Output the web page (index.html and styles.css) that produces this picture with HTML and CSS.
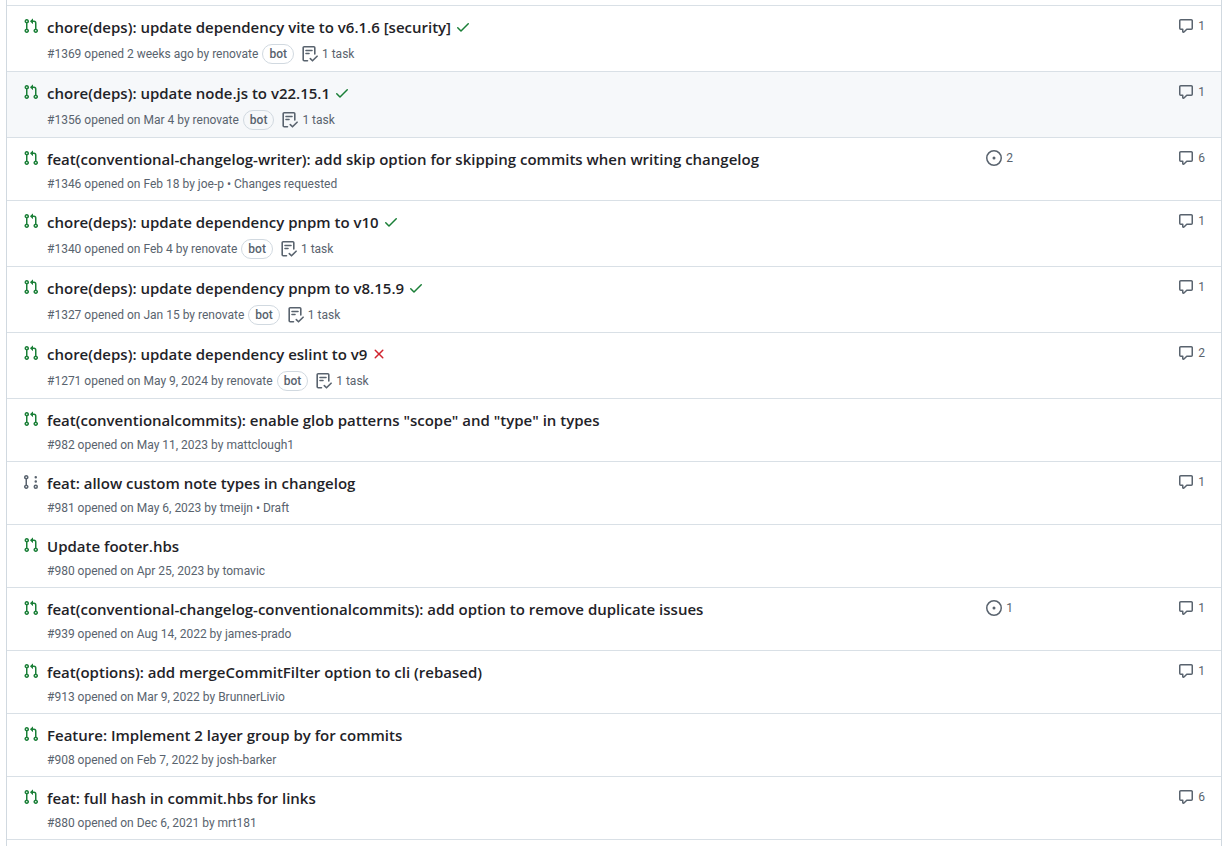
FILE: index.html
```html
<!DOCTYPE html>
<html lang="en">
<head>
<meta charset="utf-8">
<title>Pull requests</title>
<link rel="stylesheet" href="styles.css">
</head>
<body>
<svg class="sprite" aria-hidden="true">
  <symbol id="pr" viewBox="0 0 16 16"><path d="M1.5 3.25a2.25 2.25 0 1 1 3 2.122v5.256a2.251 2.251 0 1 1-1.5 0V5.372A2.25 2.25 0 0 1 1.5 3.25Zm5.677-.177L9.573.677A.25.25 0 0 1 10 .854V2.5h1A2.5 2.5 0 0 1 13.5 5v5.628a2.251 2.251 0 1 1-1.5 0V5a1 1 0 0 0-1-1h-1v1.646a.25.25 0 0 1-.427.177L7.177 3.427a.25.25 0 0 1 0-.354ZM3.75 2.5a.75.75 0 1 0 0 1.5.75.75 0 0 0 0-1.5Zm0 9.5a.75.75 0 1 0 0 1.5.75.75 0 0 0 0-1.5Zm8.25.75a.75.75 0 1 0 1.5 0 .75.75 0 0 0-1.5 0Z"/></symbol>
  <symbol id="draft" viewBox="0 0 16 16"><path d="M3.25 1A2.25 2.25 0 0 1 4 5.372v5.256a2.251 2.251 0 1 1-1.5 0V5.372A2.251 2.251 0 0 1 3.25 1Zm9.5 14a2.25 2.25 0 1 1 0-4.5 2.25 2.25 0 0 1 0 4.5ZM2.5 3.25a.75.75 0 1 0 1.5 0 .75.75 0 0 0-1.5 0ZM3.25 12a.75.75 0 1 0 0 1.5.75.75 0 0 0 0-1.5Zm9.5 0a.75.75 0 1 0 0 1.5.75.75 0 0 0 0-1.5ZM14 7.5a1.25 1.25 0 1 1-2.5 0 1.25 1.25 0 0 1 2.5 0Zm0-4.25a1.25 1.25 0 1 1-2.5 0 1.25 1.25 0 0 1 2.5 0Z"/></symbol>
  <symbol id="check" viewBox="0 0 16 16"><path d="M13.78 4.22a.75.75 0 0 1 0 1.06l-7.25 7.25a.75.75 0 0 1-1.06 0L2.22 9.28a.751.751 0 0 1 .018-1.042.751.751 0 0 1 1.042-.018L6 10.94l6.72-6.72a.75.75 0 0 1 1.06 0Z"/></symbol>
  <symbol id="x" viewBox="0 0 16 16"><path d="M3.72 3.72a.75.75 0 0 1 1.06 0L8 6.94l3.22-3.22a.749.749 0 0 1 1.275.326.749.749 0 0 1-.215.734L9.06 8l3.22 3.22a.749.749 0 0 1-.326 1.275.749.749 0 0 1-.734-.215L8 9.06l-3.22 3.22a.751.751 0 0 1-1.042-.018.751.751 0 0 1-.018-1.042L6.94 8 3.72 4.78a.75.75 0 0 1 0-1.06Z"/></symbol>
  <symbol id="comment" viewBox="0 0 16 16"><path d="M1 2.75C1 1.784 1.784 1 2.75 1h10.5c.966 0 1.75.784 1.75 1.75v7.5A1.75 1.75 0 0 1 13.25 12H9.06l-2.573 2.573A1.458 1.458 0 0 1 4 13.543V12H2.75A1.75 1.75 0 0 1 1 10.25Zm1.75-.25a.25.25 0 0 0-.25.25v7.5c0 .138.112.25.25.25h2a.75.75 0 0 1 .75.75v2.19l2.72-2.72a.749.749 0 0 1 .53-.22h4.5a.25.25 0 0 0 .25-.25v-7.5a.25.25 0 0 0-.25-.25Z"/></symbol>
  <symbol id="issue" viewBox="0 0 16 16"><path d="M8 9.5a1.5 1.5 0 1 0 0-3 1.5 1.5 0 0 0 0 3Z"/><path d="M8 0a8 8 0 1 1 0 16A8 8 0 0 1 8 0ZM1.500 8a6.500 6.500 0 1 0 13 0 6.500 6.500 0 0 0-13 0Z"/></symbol>
  <symbol id="task" viewBox="0 0 16 16"><path fill="none" stroke="currentColor" stroke-width="1.6" stroke-linecap="round" stroke-linejoin="round" d="M5.500 14.800H2.200a1 1 0 0 1-1-1V1.800a1 1 0 0 1 1-1h9.600a1 1 0 0 1 1 1V8M4 4.500h6M4 7.500h3M8.300 12.600l2.200 2.200 4.600-4.600"/></symbol>
</svg>
<main>
<ul class="list">
  <li class="row">
    <svg class="state open"><use href="#pr"/></svg>
    <div class="body">
      <div class="heading"><a class="title" href="#1369">chore(deps): update dependency vite to v6.1.6 [security]</a><svg class="status pass"><use href="#check"/></svg></div>
      <div class="meta has-label"><span>#1369 opened 2 weeks ago by <a href="#renovate">renovate</a></span><span class="label">bot</span><svg class="task"><use href="#task"/></svg><span>1 task</span></div>
    </div>
    <div class="linked"></div>
    <div class="comments"><a class="count" href="#c1369"><svg><use href="#comment"/></svg>1</a></div>
  </li>
  <li class="row focused">
    <svg class="state open"><use href="#pr"/></svg>
    <div class="body">
      <div class="heading"><a class="title" href="#1356">chore(deps): update node.js to v22.15.1</a><svg class="status pass"><use href="#check"/></svg></div>
      <div class="meta has-label"><span>#1356 opened on Mar 4 by <a href="#renovate">renovate</a></span><span class="label">bot</span><svg class="task"><use href="#task"/></svg><span>1 task</span></div>
    </div>
    <div class="linked"></div>
    <div class="comments"><a class="count" href="#c1356"><svg><use href="#comment"/></svg>1</a></div>
  </li>
  <li class="row">
    <svg class="state open"><use href="#pr"/></svg>
    <div class="body">
      <div class="heading"><a class="title" href="#1346">feat(conventional-changelog-writer): add skip option for skipping commits when writing changelog</a></div>
      <div class="meta"><span>#1346 opened on Feb 18 by <a href="#joe-p">joe-p</a> • <a href="#review">Changes requested</a></span></div>
    </div>
    <div class="linked"><a class="count" href="#l1346"><svg class="issue"><use href="#issue"/></svg>2</a></div>
    <div class="comments"><a class="count" href="#c1346"><svg><use href="#comment"/></svg>6</a></div>
  </li>
  <li class="row">
    <svg class="state open"><use href="#pr"/></svg>
    <div class="body">
      <div class="heading"><a class="title" href="#1340">chore(deps): update dependency pnpm to v10</a><svg class="status pass"><use href="#check"/></svg></div>
      <div class="meta has-label"><span>#1340 opened on Feb 4 by <a href="#renovate">renovate</a></span><span class="label">bot</span><svg class="task"><use href="#task"/></svg><span>1 task</span></div>
    </div>
    <div class="linked"></div>
    <div class="comments"><a class="count" href="#c1340"><svg><use href="#comment"/></svg>1</a></div>
  </li>
  <li class="row">
    <svg class="state open"><use href="#pr"/></svg>
    <div class="body">
      <div class="heading"><a class="title" href="#1327">chore(deps): update dependency pnpm to v8.15.9</a><svg class="status pass"><use href="#check"/></svg></div>
      <div class="meta has-label"><span>#1327 opened on Jan 15 by <a href="#renovate">renovate</a></span><span class="label">bot</span><svg class="task"><use href="#task"/></svg><span>1 task</span></div>
    </div>
    <div class="linked"></div>
    <div class="comments"><a class="count" href="#c1327"><svg><use href="#comment"/></svg>1</a></div>
  </li>
  <li class="row">
    <svg class="state open"><use href="#pr"/></svg>
    <div class="body">
      <div class="heading"><a class="title" href="#1271">chore(deps): update dependency eslint to v9</a><svg class="status fail"><use href="#x"/></svg></div>
      <div class="meta has-label"><span>#1271 opened on May 9, 2024 by <a href="#renovate">renovate</a></span><span class="label">bot</span><svg class="task"><use href="#task"/></svg><span>1 task</span></div>
    </div>
    <div class="linked"></div>
    <div class="comments"><a class="count" href="#c1271"><svg><use href="#comment"/></svg>2</a></div>
  </li>
  <li class="row">
    <svg class="state open"><use href="#pr"/></svg>
    <div class="body">
      <div class="heading"><a class="title" href="#982">feat(conventionalcommits): enable glob patterns "scope" and "type" in types</a></div>
      <div class="meta"><span>#982 opened on May 11, 2023 by <a href="#mattclough1">mattclough1</a></span></div>
    </div>
    <div class="linked"></div>
    <div class="comments"></div>
  </li>
  <li class="row">
    <svg class="state"><use href="#draft"/></svg>
    <div class="body">
      <div class="heading"><a class="title" href="#981">feat: allow custom note types in changelog</a></div>
      <div class="meta"><span>#981 opened on May 6, 2023 by <a href="#tmeijn">tmeijn</a> • Draft</span></div>
    </div>
    <div class="linked"></div>
    <div class="comments"><a class="count" href="#c981"><svg><use href="#comment"/></svg>1</a></div>
  </li>
  <li class="row">
    <svg class="state open"><use href="#pr"/></svg>
    <div class="body">
      <div class="heading"><a class="title" href="#980">Update footer.hbs</a></div>
      <div class="meta"><span>#980 opened on Apr 25, 2023 by <a href="#tomavic">tomavic</a></span></div>
    </div>
    <div class="linked"></div>
    <div class="comments"></div>
  </li>
  <li class="row">
    <svg class="state open"><use href="#pr"/></svg>
    <div class="body">
      <div class="heading"><a class="title" href="#939">feat(conventional-changelog-conventionalcommits): add option to remove duplicate issues</a></div>
      <div class="meta"><span>#939 opened on Aug 14, 2022 by <a href="#james-prado">james-prado</a></span></div>
    </div>
    <div class="linked"><a class="count" href="#l939"><svg class="issue"><use href="#issue"/></svg>1</a></div>
    <div class="comments"><a class="count" href="#c939"><svg><use href="#comment"/></svg>1</a></div>
  </li>
  <li class="row">
    <svg class="state open"><use href="#pr"/></svg>
    <div class="body">
      <div class="heading"><a class="title" href="#913">feat(options): add mergeCommitFilter option to cli (rebased)</a></div>
      <div class="meta"><span>#913 opened on Mar 9, 2022 by <a href="#BrunnerLivio">BrunnerLivio</a></span></div>
    </div>
    <div class="linked"></div>
    <div class="comments"><a class="count" href="#c913"><svg><use href="#comment"/></svg>1</a></div>
  </li>
  <li class="row">
    <svg class="state open"><use href="#pr"/></svg>
    <div class="body">
      <div class="heading"><a class="title" href="#908">Feature: Implement 2 layer group by for commits</a></div>
      <div class="meta"><span>#908 opened on Feb 7, 2022 by <a href="#josh-barker">josh-barker</a></span></div>
    </div>
    <div class="linked"></div>
    <div class="comments"></div>
  </li>
  <li class="row">
    <svg class="state open"><use href="#pr"/></svg>
    <div class="body">
      <div class="heading"><a class="title" href="#880">feat: full hash in commit.hbs for links</a></div>
      <div class="meta"><span>#880 opened on Dec 6, 2021 by <a href="#mrt181">mrt181</a></span></div>
    </div>
    <div class="linked"></div>
    <div class="comments"><a class="count" href="#c880"><svg><use href="#comment"/></svg>6</a></div>
  </li>
</ul>
</main>
</body>
</html>
```
FILE: styles.css
```css
* { box-sizing: border-box; }
body {
  margin: 0;
  background: #fff;
  color: #1f2328;
  font-family: "Segoe UI", Roboto, sans-serif;
  font-size: 12px;
}
a { color: inherit; text-decoration: none; }
a:hover { color: #0969da; }
svg { fill: currentColor; flex: none; }
.sprite { position: absolute; width: 0; height: 0; }
main {
  min-height: 100vh;
  margin: 0 4px 0 6px;
  padding-top: 5px;
  border: 1px solid #d1d9e0;
  border-width: 0 1px;
}
.list { list-style: none; margin: 0; padding: 0; border-bottom: 1px solid #d9e0e6; }
.row {
  display: flex;
  align-items: flex-start;
  border-top: 1px solid #d9e0e6;
  padding: 8px 16px 6px 15px;
}
.focused { background: #f6f8fa; }
.state { width: 18px; height: 16px; margin-top: 4px; color: #59636e; }
.open { color: #1a7f37; }
.body { flex: 1; min-width: 0; padding-left: 7px; }
.heading { display: flex; align-items: center; gap: 4px; }
.title { font-family: "Segoe UI", "Open Sans", sans-serif; font-size: 15px; line-height: 26px; font-weight: 600; }
.status { width: 16px; height: 16px; }
.pass { color: #1a7f37; }
.fail { color: #d1242f; }
.meta { display: flex; align-items: center; height: 20px; margin-top: 2px; color: #59636e; line-height: 20px; }
.has-label { height: 23px; }
.label {
  margin: 0 8px 0 4px;
  padding: 0 6px;
  border: 1px solid #d1d9e0;
  border-radius: 10px;
  line-height: 18px;
  font-weight: 500;
}
.task { width: 16px; height: 16px; margin-right: 4px; }
.linked, .comments { display: flex; justify-content: flex-end; color: #59636e; padding-top: 3px; }
.linked { width: 96px; }
.comments { width: 192px; }
.count { display: flex; align-items: center; gap: 4px; line-height: 18px; }
.count svg { width: 16px; height: 16px; }
```
